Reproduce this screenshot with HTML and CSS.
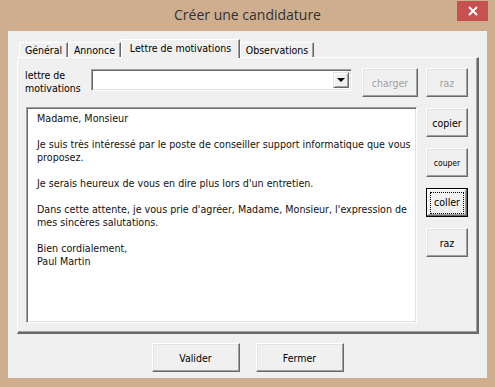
FILE: index.html
```html
<!DOCTYPE html>
<html lang="fr">
<head>
<meta charset="utf-8">
<title>Créer une candidature</title>
<link rel="stylesheet" href="styles.css">
</head>
<body>
<div class="window">
  <div class="titlebar">
    <span class="spacer"></span>
    <div class="title">Créer une candidature</div>
    <div class="close">
      <svg width="10" height="10" viewBox="0 0 10 10"><path d="M1 1 L9 9 M9 1 L1 9" stroke="#fff" stroke-width="2" fill="none"/></svg>
    </div>
  </div>
  <div class="client">
    <div class="tabs">
      <div class="tab t-general">Général</div>
      <div class="tab t-annonce">Annonce</div>
      <div class="tab t-lettre active">Lettre de motivations</div>
      <div class="tab t-obs">Observations</div>
    </div>
    <div class="panel">
      <div class="row-top">
        <div class="label">lettre de<br>motivations</div>
        <div class="combo">
          <div class="combo-field"></div>
          <div class="combo-btn"><span class="arrow"></span></div>
        </div>
        <div class="btn disabled charger">charger</div>
        <div class="btn disabled raz-top">raz</div>
      </div>
      <div class="row-main">
        <div class="editor">
          <p>Madame, Monsieur</p>
          <p>Je suis très intéressé par le poste de conseiller support informatique que vous proposez.</p>
          <p>Je serais heureux de vous en dire plus lors d'un entretien.</p>
          <p>Dans cette attente, je vous prie d'agréer, Madame, Monsieur, l'expression de mes sincères salutations.</p>
          <p>Bien cordialement,<br>Paul Martin</p>
        </div>
        <div class="side">
          <div class="btn side-btn">copier</div>
          <div class="btn side-btn small">couper</div>
          <div class="btn side-btn focused"><span class="focus">coller</span></div>
          <div class="btn side-btn">raz</div>
        </div>
      </div>
    </div>
    <div class="footer">
      <div class="btn big">Valider</div>
      <div class="btn big">Fermer</div>
    </div>
  </div>
</div>
</body>
</html>
```
FILE: styles.css
```css
* { box-sizing: border-box; }
html, body { margin: 0; padding: 0; }
body {
  width: 495px;
  height: 387px;
  overflow: hidden;
  background: #cfae8f;
  font-family: "DejaVu Sans Condensed", "Liberation Sans", sans-serif;
  font-size: 10.5px;
  color: #000;
}
.window {
  width: 495px;
  height: 387px;
  background: #cfae8f;
  display: flex;
  flex-direction: column;
}
.titlebar {
  height: 31px;
  display: grid;
  grid-template-columns: 1fr auto 1fr;
  align-items: start;
}
.title {
  font-family: "Open Sans", "Noto Sans", sans-serif;
  font-size: 14px;
  color: #333;
  line-height: 20px;
  margin-top: 5px;
  white-space: nowrap;
}
.close {
  justify-self: end;
  width: 31px;
  height: 20px;
  margin-top: 1px;
  margin-right: 7px;
  background: #c75050;
  display: flex;
  align-items: center;
  justify-content: center;
}
.close svg { display: block; }
.client {
  margin: 0 8px;
  height: 347px;
  background: #f0f0f0;
  padding: 8px 8px 0 9px;
  display: flex;
  flex-direction: column;
}
.tabs {
  display: flex;
  align-items: flex-end;
  height: 18px;
  padding-left: 2px;
  position: relative;
  z-index: 1;
}
.tab {
  height: 15px;
  line-height: 14px;
  text-align: center;
  background: #f0f0f0;
  border-top: 1px solid #fff;
  border-left: 1px solid #fff;
  border-right: 1px solid #696969;
  box-shadow: inset -1px 0 #a0a0a0;
  white-space: nowrap;
}
.t-general { width: 49px; }
.t-annonce { width: 53px; }
.t-lettre { width: 119px; }
.t-obs { width: 74px; }
.tab.active {
  height: 19px;
  line-height: 16px;
  margin-bottom: -1px;
  position: relative;
}
.panel {
  width: 462px;
  height: 277px;
  border-top: 1px solid #fff;
  border-left: 1px solid #fff;
  border-right: 2px solid #696969;
  border-bottom: 2px solid #696969;
  box-shadow: inset -1px -1px #a0a0a0;
  padding: 10px 0 0 7px;
  display: flex;
  flex-direction: column;
}
.row-top {
  display: flex;
  align-items: flex-start;
  height: 29px;
}
.label {
  width: 66px;
  line-height: 13px;
  padding-top: 1px;
}
.combo {
  width: 261px;
  height: 22px;
  margin-top: 1px;
  background: #fff;
  border-top: 1px solid #a0a0a0;
  border-left: 1px solid #a0a0a0;
  border-right: 1px solid #fff;
  border-bottom: 1px solid #fff;
  box-shadow: inset 1px 1px #696969, inset -1px -1px #e3e3e3;
  display: flex;
  padding: 2px;
}
.combo-field { flex: 1; }
.combo-btn {
  width: 16px;
  height: 16px;
  background: #f0f0f0;
  border-top: 1px solid #e3e3e3;
  border-left: 1px solid #e3e3e3;
  border-right: 1px solid #696969;
  border-bottom: 1px solid #696969;
  box-shadow: inset 1px 1px #fff, inset -1px -1px #a0a0a0;
  display: flex;
  align-items: center;
  justify-content: center;
}
.arrow {
  width: 0;
  height: 0;
  border-left: 4px solid transparent;
  border-right: 4px solid transparent;
  border-top: 4px solid #000;
}
.btn {
  display: flex;
  align-items: center;
  justify-content: center;
  background: #f0f0f0;
  height: 29px;
  border-top: 1px solid #fff;
  border-left: 1px solid #fff;
  border-right: 1px solid #696969;
  border-bottom: 1px solid #696969;
  box-shadow: inset -1px -1px #a0a0a0, inset 1px 1px #e3e3e3;
  white-space: nowrap;
  font-size: 10.5px;
}
.btn.disabled { color: #a0a0a0; }
.charger { width: 56px; margin-left: 10px; }
.raz-top { width: 42px; margin-left: 8px; }
.row-main {
  display: flex;
  margin-top: 10px;
  align-items: flex-start;
}
.editor {
  width: 391px;
  height: 216px;
  margin-left: 1px;
  background: #fff;
  border-top: 1px solid #a0a0a0;
  border-left: 1px solid #a0a0a0;
  border-right: 1px solid #fff;
  border-bottom: 1px solid #fff;
  box-shadow: inset 1px 1px #696969, inset -1px -1px #e3e3e3;
  padding: 4px 0 0 10px;
  line-height: 13px;
  font-size: 10.65px;
  color: #111;
}
.editor p { margin: 0 0 13px; }
.side {
  margin-left: 9px;
  margin-top: 1px;
  display: flex;
  flex-direction: column;
  gap: 11px;
}
.side-btn { width: 42px; }
.side-btn.small { font-size: 8.5px; }
.side-btn.focused {
  border: 1px solid #000;
  box-shadow: inset -1px -1px #696969, inset 1px 1px #fff, inset -2px -2px #a0a0a0;
}
.focus {
  border: 1px dotted #000;
  padding: 3px 3px 4px;
  line-height: 13px;
}
.footer {
  display: flex;
  justify-content: center;
  gap: 16px;
  margin-top: 9px;
  padding-right: 1px;
}
.btn.big { width: 88px; }
```
